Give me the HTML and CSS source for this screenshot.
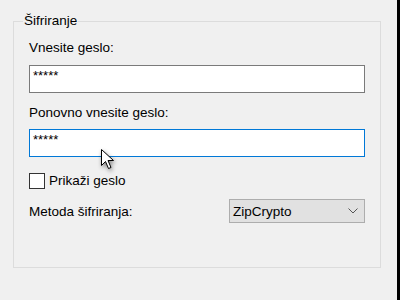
FILE: index.html
```html
<!DOCTYPE html>
<html lang="sl">
<head>
  <meta charset="UTF-8" />
  <title>Šifriranje</title>
  <link rel="stylesheet" href="styles.css">
</head>
<body>
  <div class="window">
    <div class="panel">
      <!-- Encryption group -->
      <fieldset class="group">
        <legend class="group-title">Šifriranje</legend>

        <label class="field-label" for="pass1">Vnesite geslo:</label>
        <div class="text-box">*****</div>

        <label class="field-label second" for="pass2">Ponovno vnesite geslo:</label>
        <div class="text-box focused">*****</div>

        <div class="check-row">
          <span class="check-box"></span>
          <span>Prikaži geslo</span>
        </div>

        <div class="method-row">
          <span>Metoda šifriranja:</span>
          <div class="combo">
            <span>ZipCrypto</span>
            <svg class="chevron" width="10" height="6" viewBox="0 0 10 6">
              <path d="M0.5 0.5 L5 5 L9.5 0.5" fill="none" stroke="#555" stroke-width="1"/>
            </svg>
          </div>
        </div>
      </fieldset>

      <!-- mouse pointer -->
      <svg class="cursor" width="16" height="24" viewBox="0 0 16 24">
        <path d="M1.5 1.5 L1.5 17.5 L5.5 13.5 L8.5 20.5 L11 19.5 L8 12.5 L13.5 12.5 Z" fill="#fff" stroke="#000" stroke-width="1" stroke-linejoin="miter"/>
      </svg>
    </div>
    <div class="edge"></div>
  </div>
</body>
</html>
```

FILE: styles.css
```css
body {
  margin: 0;
  background: #f0f0f0;
  font-family: 'Liberation Sans', Arial, sans-serif;
  font-size: 13.5px;
  color: #000;
}

.window {
  display: flex;
  width: 400px;
  height: 300px;
  overflow: hidden;
}

.panel {
  position: relative;
  flex: 1;
  padding: 13px 0 0 13px;
}

.edge {
  width: 3px;
  background: #000;
}

.group {
  box-sizing: border-box;
  width: 368px;
  height: 255px;
  margin: 0;
  padding: 11px 15px 0 15px;
  border: 1px solid #dcdcdc;
  min-width: 0;
}

.group-title {
  padding: 0 1px 0 1px;
  margin-left: -6px;
  line-height: 16px;
}

.field-label {
  display: block;
  line-height: 16px;
  margin-bottom: 9px;
}

.field-label.second {
  margin-top: 12px;
  margin-bottom: 8px;
}

.text-box {
  box-sizing: border-box;
  width: 336px;
  height: 28px;
  padding: 3px 0 0 3px;
  background: #fff;
  border: 1px solid #7a7a7a;
  font-size: 13px;
  line-height: 14px;
}

.text-box.focused {
  border-color: #0078d7;
}

.check-row {
  display: flex;
  align-items: center;
  gap: 4px;
  margin-top: 16px;
  line-height: 16px;
}

.check-box {
  box-sizing: border-box;
  width: 16px;
  height: 16px;
  background: #fff;
  border: 1px solid #333;
}

.method-row {
  display: flex;
  align-items: center;
  justify-content: space-between;
  margin-top: 10px;
}

.combo {
  box-sizing: border-box;
  display: flex;
  align-items: center;
  justify-content: space-between;
  width: 136px;
  height: 24px;
  padding: 0 6px 0 3px;
  background: #e1e1e1;
  border: 1px solid #adadad;
}

.chevron {
  display: block;
}

.cursor {
  position: absolute;
  left: 100px;
  top: 148px;
  filter: drop-shadow(1px 2px 2px rgba(0, 0, 0, 0.45));
}
```
